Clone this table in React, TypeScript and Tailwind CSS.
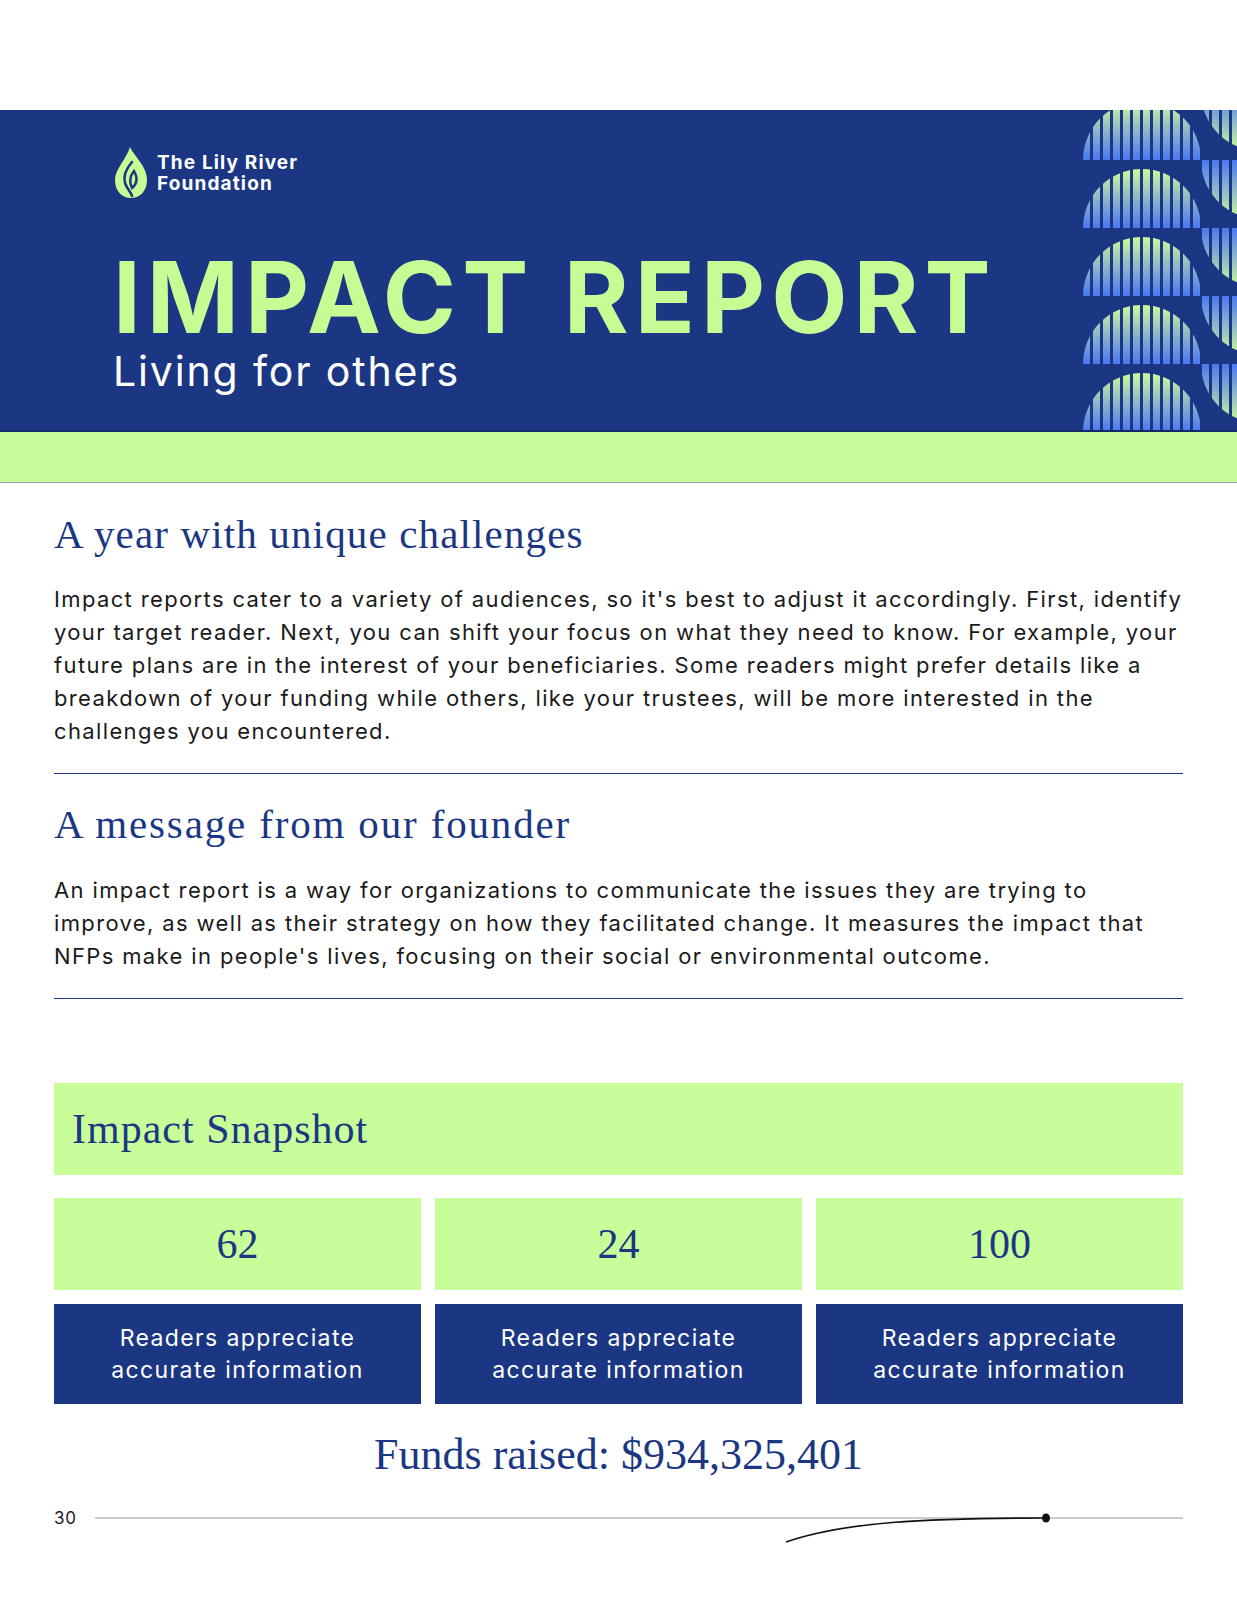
import React from 'react';

const SANS = { fontFamily: 'Inter, "Liberation Sans", sans-serif' };
const SERIF = { fontFamily: '"Liberation Serif", "DejaVu Serif", serif' };

const ROWS = [50, 118, 186, 254, 322];

const INTRO = [
  "Impact reports cater to a variety of audiences, so it's best to adjust it accordingly. First, identify",
  'your target reader. Next, you can shift your focus on what they need to know. For example, your',
  'future plans are in the interest of your beneficiaries. Some readers might prefer details like a',
  'breakdown of your funding while others, like your trustees, will be more interested in the',
  'challenges you encountered.',
];

const FOUNDER = [
  'An impact report is a way for organizations to communicate the issues they are trying to',
  'improve, as well as their strategy on how they facilitated change. It measures the impact that',
  "NFPs make in people's lives, focusing on their social or environmental outcome.",
];

function Pattern() {
  const stripes = Array.from({ length: 12 }, (_, i) => 13 + i * 10);
  const bowlStripes = Array.from({ length: 5 }, (_, i) => 132 + i * 10);
  return (
    <svg className="absolute right-0 top-0 h-[320px] w-[167px]" viewBox="0 0 167 320">
      <defs>
        <linearGradient id="up" x1="0" y1="0" x2="0" y2="1">
          <stop offset="0" stopColor="#cbfd98" />
          <stop offset="0.5" stopColor="#8fb6c9" />
          <stop offset="1" stopColor="#4a78f2" />
        </linearGradient>
        <linearGradient id="down" x1="0" y1="0" x2="0" y2="1">
          <stop offset="0" stopColor="#4a78f2" />
          <stop offset="0.5" stopColor="#8fb6c9" />
          <stop offset="1" stopColor="#cbfd98" />
        </linearGradient>
        {ROWS.map((b) => (
          <clipPath id={`dome${b}`} key={b}>
            <path d={`M13 ${b} A59 59 0 0 1 131 ${b} Z`} />
          </clipPath>
        ))}
        {[-18, ...ROWS].map((t) => (
          <clipPath id={`bowl${t}`} key={t}>
            <path d={`M131 ${t} A59 59 0 0 0 249 ${t} Z`} />
          </clipPath>
        ))}
      </defs>
      {ROWS.map((b) => (
        <g clipPath={`url(#dome${b})`} key={b}>
          {stripes.map((x) => (
            <rect key={x} x={x} y={b - 59} width="7" height="59" fill="url(#up)" />
          ))}
        </g>
      ))}
      {[-18, ...ROWS].map((t) => (
        <g clipPath={`url(#bowl${t})`} key={t}>
          {bowlStripes.map((x) => (
            <rect key={x} x={x} y={t} width="7" height="59" fill="url(#down)" />
          ))}
        </g>
      ))}
    </svg>
  );
}

function LogoIcon() {
  return (
    <svg width="36" height="52" viewBox="0 0 36 52">
      <path
        d="M17 0 C21 9 34 19 34 33 C34 44 27 51 18 51 C9 51 2 44 2 33 C2 22 13 13 17 0 Z"
        fill="#c6fc94"
      />
      <path
        d="M19 15 C13 22 10 29 12 36 C14 42 18 45 19 49"
        fill="none"
        stroke="#1b3783"
        strokeWidth="2.6"
        strokeLinecap="round"
      />
      <path
        d="M21 24 C17 29 16 35 19 41 C24 37 25 31 21 24 Z"
        fill="none"
        stroke="#1b3783"
        strokeWidth="2.4"
      />
    </svg>
  );
}

function Paragraph({ lines }: { lines: string[] }) {
  return (
    <div className="text-[22px] leading-[33px] tracking-[0.062em] text-[#1a1a1a]" style={SANS}>
      {lines.map((l) => (
        <div key={l} className="whitespace-nowrap">
          {l}
        </div>
      ))}
    </div>
  );
}

function StatColumn({ value }: { value: string }) {
  return (
    <div className="flex flex-col gap-[14px]">
      <div className="h-[92px] bg-[#c9fd99] flex items-center justify-center">
        <span className="text-[42px] leading-[48px] text-[#1b3783]" style={SERIF}>
          {value}
        </span>
      </div>
      <div className="h-[100px] bg-[#1b3783] flex items-center justify-center">
        <p className="text-[23px] leading-[32px] tracking-[0.06em] text-white text-center" style={SANS}>
          Readers appreciate
          <br />
          accurate information
        </p>
      </div>
    </div>
  );
}

export default function App() {
  return (
    <div className="w-[1237px] h-[1600px] bg-white overflow-hidden">
      {/* Banner */}
      <header className="mt-[110px]">
        <div className="relative h-[322px] bg-[#1b3783] border-b-2 border-[#13296c] pl-[113px] pt-[37px] overflow-hidden">
          <div className="flex items-center gap-[8px]">
            <LogoIcon />
            <div className="text-[19px] leading-[21px] font-bold tracking-[0.06em] text-white" style={SANS}>
              The Lily River
              <br />
              Foundation
            </div>
          </div>
          <h1
            className="mt-[56px] text-[99px] leading-[84px] font-bold text-[#c6fc94] tracking-[0.061em]"
            style={SANS}
          >
            IMPACT REPORT
          </h1>
          <p className="mt-[14px] text-[41px] leading-[36px] tracking-[0.045em] text-white" style={SANS}>
            Living for others
          </p>
          <Pattern />
        </div>
        <div className="h-[51px] bg-[#c9fd99] border-b border-[#8ea3b5]" />
      </header>

      <main className="px-[54px]">
        <h2 className="mt-[27px] text-[41px] leading-[48px] tracking-[0.028em] text-[#1b3783]" style={SERIF}>
          A year with unique challenges
        </h2>
        <div className="mt-[25px]">
          <Paragraph lines={INTRO} />
        </div>
        <div className="mt-[25px] border-t-[1.5px] border-[#1b3783]" />

        <h2 className="mt-[26px] text-[41px] leading-[48px] tracking-[0.045em] text-[#1b3783]" style={SERIF}>
          A message from our founder
        </h2>
        <div className="mt-[26px]">
          <Paragraph lines={FOUNDER} />
        </div>
        <div className="mt-[25px] border-t-[1.5px] border-[#1b3783]" />

        {/* Snapshot */}
        <div className="mt-[84px] h-[92px] bg-[#c9fd99] flex items-center pl-[18px]">
          <h3 className="text-[42px] leading-[48px] tracking-[0.024em] text-[#1b3783]" style={SERIF}>
            Impact Snapshot
          </h3>
        </div>
        <div className="mt-[23px] grid grid-cols-3 gap-[14px]">
          <StatColumn value="62" />
          <StatColumn value="24" />
          <StatColumn value="100" />
        </div>

        <p className="mt-[26px] text-center text-[44px] leading-[50px] text-[#1b3783]" style={SERIF}>
          Funds raised: $934,325,401
        </p>

        {/* Footer */}
        <footer className="relative mt-[28px] h-[20px] flex items-center gap-[18px]">
          <span className="text-[17px] leading-[20px] tracking-[0.05em] text-[#1a1a1a]" style={SANS}>
            30
          </span>
          <div className="flex-1 h-[2px] bg-[#cccccc]" />
          <svg
            className="absolute left-[720px] top-[-2px] overflow-visible"
            width="280"
            height="40"
            viewBox="0 0 280 40"
          >
            <path d="M12 36 C70 16 150 12 272 12" fill="none" stroke="#111" strokeWidth="1.6" />
            <ellipse cx="272" cy="12" rx="4" ry="4.5" fill="#111" />
          </svg>
        </footer>
      </main>
    </div>
  );
}
